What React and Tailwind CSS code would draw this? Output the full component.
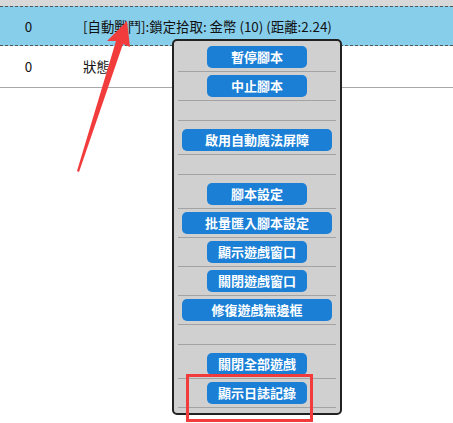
const menu = [
  { type: 'btn', label: '暫停腳本' },
  { type: 'btn', label: '中止腳本' },
  { type: 'gap' },
  { type: 'btn', label: '啟用自動魔法屏障', wide: true },
  { type: 'gap' },
  { type: 'btn', label: '腳本設定' },
  { type: 'btn', label: '批量匯入腳本設定', wide: true },
  { type: 'btn', label: '顯示遊戲窗口' },
  { type: 'btn', label: '關閉遊戲窗口' },
  { type: 'btn', label: '修復遊戲無邊框', wide: true },
  { type: 'gap' },
  { type: 'btn', label: '關閉全部遊戲' },
  { type: 'btn', label: '顯示日誌記錄' },
];

const Sep = () => <div className="mx-[4px] h-px bg-[#a3a3a3]" />;

const MenuItem = ({ item, first }) => {
  if (item.type === 'gap') {
    return (
      <>
        <div className="h-[19px]" />
        <Sep />
        <div className="h-[5px]" />
      </>
    );
  }
  return (
    <>
      {!first && <div className="h-[3px]" />}
      <button
        className={
          'mx-auto flex h-[22px] items-center justify-center rounded-[5px] bg-[#1b7fd6] text-[13px] font-bold text-white ' +
          (item.wide ? 'w-[150px]' : 'w-[100px]')
        }
      >
        {item.label}
      </button>
      <div className="h-[3px]" />
      <Sep />
    </>
  );
};

export default function App() {
  return (
    <div
      className="relative h-[423px] w-[453px] overflow-hidden bg-white text-[13.4px] text-[#111]"
      style={{ fontFamily: '"Noto Sans CJK TC", "Noto Sans", sans-serif' }}
    >
      <div className="h-[6px] bg-[#d8d8d8]" />
      <div className="flex h-[40px] items-center border-y border-dashed border-[#555] bg-[#87ceeb]">
        <div className="w-[57px] text-center">0</div>
        <div className="pl-[26px]">[自動戰鬥]:鎖定拾取: 金幣 (10) (距離:2.24)</div>
      </div>
      <div className="flex h-[42px] items-center border-b border-[#a8a8a8]">
        <div className="w-[57px] text-center">0</div>
        <div className="pl-[26px]">狀態</div>
      </div>

      {/* context menu */}
      <div className="absolute left-[172px] top-[39px] w-[170px] rounded-[5px] border-2 border-[#222] bg-[#d0d0d0] pt-[5px] pb-[5px]">
        {menu.map((item, i) => (
          <MenuItem key={i} item={item} first={i === 0} />
        ))}
      </div>

      {/* annotation arrow */}
      <svg className="absolute left-0 top-0" width="453" height="423">
        <polygon
          points="127,21 130,47 123,44 79,172 77,171 116,41 107,41"
          fill="#f23b3b"
        />
      </svg>

      {/* highlight box */}
      <div className="absolute left-[186px] top-[374px] h-[48px] w-[127px] border-[3px] border-[#f23b3b]" />
    </div>
  );
}
